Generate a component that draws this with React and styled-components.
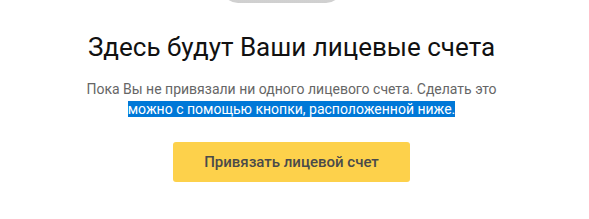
import React from 'react'
import styled, { createGlobalStyle } from 'styled-components'

const Global = createGlobalStyle`
  body {
    margin: 0;
    background: #fff;
    font-family: Roboto, "Liberation Sans", sans-serif;
  }
`

const Page = styled.div`
  width: 583px;
  display: flex;
  flex-direction: column;
  align-items: center;
`

const Picture = styled.div`
  width: 120px;
  height: 36px;
  margin-top: -33px;
  margin-left: -19px;
  border-radius: 0 0 16px 16px;
  background: linear-gradient(#e2e2e2, #cfcfcf);
`

const Title = styled.h1`
  margin: 28px 0 0;
  font-size: 26px;
  font-weight: 400;
  color: #111;
  line-height: 32px;
`

const Text = styled.p`
  margin: 16px 0 0;
  width: 420px;
  text-align: center;
  font-size: 14px;
  line-height: 20px;
  color: #666;
`

const Selected = styled.span`
  background: #0078d7;
  color: #fff;
`

const Button = styled.button`
  margin-top: 23px;
  width: 237px;
  height: 40px;
  border: none;
  border-radius: 3px;
  background: #fdd14b;
  color: #4a4a4a;
  font-family: Roboto, "Liberation Sans", sans-serif;
  font-size: 15px;
  font-weight: 500;
`

export default function App() {
  return (
    <>
      <Global />
      <Page>
        <Picture />
        <Title>Здесь будут Ваши лицевые счета</Title>
        <Text>
          Пока Вы не привязали ни одного лицевого счета. Сделать это{' '}
          <Selected>можно с помощью кнопки, расположенной ниже.</Selected>
        </Text>
        <Button>Привязать лицевой счет</Button>
      </Page>
    </>
  )
}
